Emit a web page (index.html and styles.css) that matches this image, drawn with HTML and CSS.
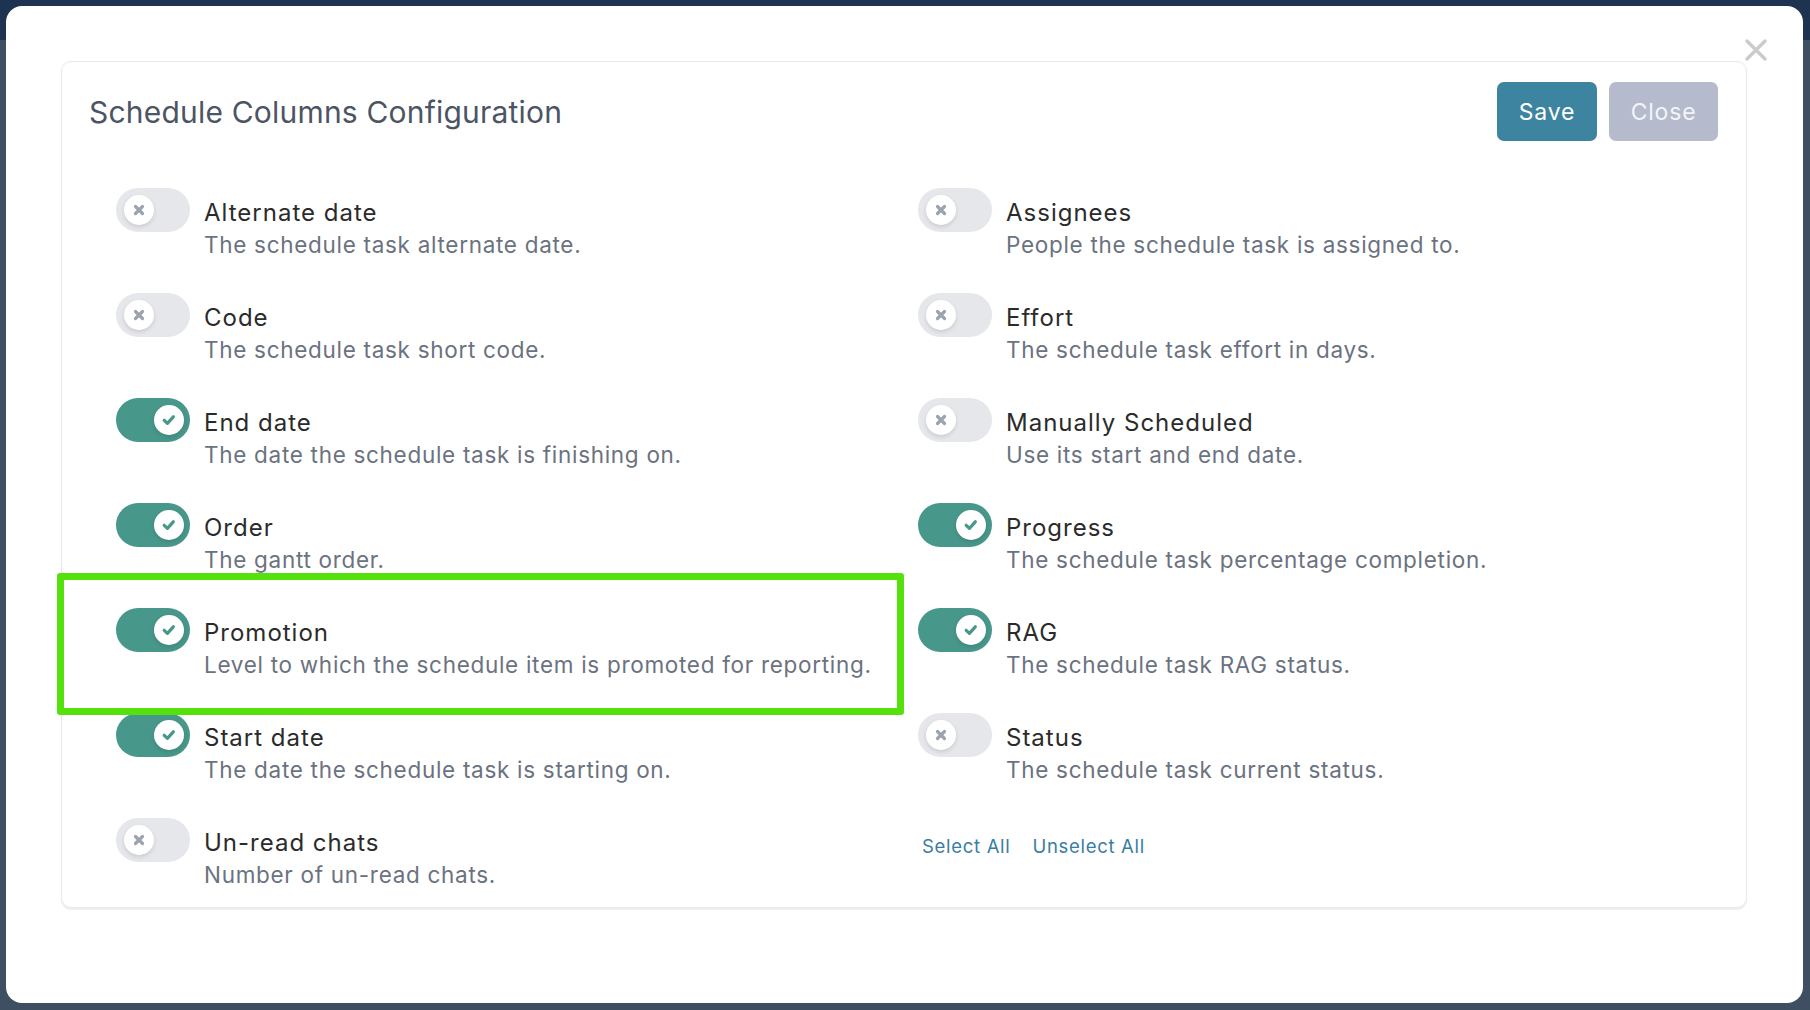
FILE: index.html
```html
<!DOCTYPE html>
<html lang="en">
<head>
  <meta charset="UTF-8">
  <meta name="viewport" content="width=device-width, initial-scale=1.0">
  <title>Schedule Columns Configuration</title>
  <link rel="stylesheet" href="styles.css">
</head>
<body>
  <div class="modal">
    <svg class="modal-x" viewBox="0 0 22 22"><path d="M2 2l18 18M20 2L2 20" stroke="#cbcbcb" stroke-width="3.4" stroke-linecap="round"/></svg>

    <div class="card">
      <div class="card-head">
        <h1>Schedule Columns Configuration</h1>
        <div class="actions">
          <button class="btn save">Save</button>
          <button class="btn close">Close</button>
        </div>
      </div>

      <div class="columns" id="columnsGrid">
        <!-- columns are rendered by JS -->
      </div>
    </div>

    <div class="highlight"></div>
  </div>

  <script>
    const grid = document.getElementById("columnsGrid");

    const columns = [
      { name: "Alternate date", desc: "The schedule task alternate date.", on: false },
      { name: "Code", desc: "The schedule task short code.", on: false },
      { name: "End date", desc: "The date the schedule task is finishing on.", on: true },
      { name: "Order", desc: "The gantt order.", on: true },
      { name: "Promotion", desc: "Level to which the schedule item is promoted for reporting.", on: true },
      { name: "Start date", desc: "The date the schedule task is starting on.", on: true },
      { name: "Un-read chats", desc: "Number of un-read chats.", on: false },
      { name: "Assignees", desc: "People the schedule task is assigned to.", on: false },
      { name: "Effort", desc: "The schedule task effort in days.", on: false },
      { name: "Manually Scheduled", desc: "Use its start and end date.", on: false },
      { name: "Progress", desc: "The schedule task percentage completion.", on: true },
      { name: "RAG", desc: "The schedule task RAG status.", on: true },
      { name: "Status", desc: "The schedule task current status.", on: false },
    ];

    const crossIcon = '<svg width="12" height="12" viewBox="0 0 12 12"><path d="M2.5 2.5l7 7M9.5 2.5l-7 7" stroke="#9ca3af" stroke-width="3.2" stroke-linecap="round"/></svg>';
    const checkIcon = '<svg width="16" height="16" viewBox="0 0 16 16"><path d="M3.2 8.3l3.2 3 5.9-6.5" fill="none" stroke="#48978b" stroke-width="3.2" stroke-linecap="round" stroke-linejoin="round"/></svg>';

    columns.forEach(col => {
      const item = document.createElement("div");
      item.className = "item";
      item.innerHTML = `
        <span class="toggle ${col.on ? "on" : ""}"><span class="knob">${col.on ? checkIcon : crossIcon}</span></span>
        <div class="text">
          <div class="label">${col.name}</div>
          <div class="desc">${col.desc}</div>
        </div>`;
      grid.appendChild(item);
    });

    // Select / unselect links sit in the last cell
    const links = document.createElement("div");
    links.className = "links";
    links.innerHTML = '<a href="#">Select All</a><a href="#">Unselect All</a>';
    grid.appendChild(links);
  </script>
</body>
</html>
```

FILE: styles.css
```css
html, body { height: 100%; }
body { margin: 0; padding: 6px 7px 7px 6px; box-sizing: border-box; font-family: Inter, "Noto Sans", sans-serif; background: linear-gradient(#1d3350 0 40px, #3e4f61 40px); }
.modal { position: relative; height: 100%; box-sizing: border-box; padding: 55px 56px 0 55px; background: #fff; border-radius: 16px; }
.modal-x { position: absolute; top: 33px; right: 36px; width: 22px; height: 22px; }

.card { border: 1px solid #e6e8eb; border-radius: 10px; box-shadow: 0 2px 0 #eceef0; padding: 20px 28px 16px 27px; }
.card-head { display: flex; justify-content: space-between; align-items: center; }
h1 { margin: 0; font-size: 30px; font-weight: 400; letter-spacing: 0.2px; color: #4b5563; }
.actions { display: flex; gap: 12px; }
.btn { height: 59px; padding: 0; border: 0; border-radius: 7px; font-family: inherit; font-size: 23px; letter-spacing: 0.8px; color: #fff; cursor: pointer; }
.save { width: 100px; background: #3d84a1; }
.close { width: 109px; background: #b5bbcc; color: #f3f4f8; }

.columns { display: grid; grid-template-columns: 802px 1fr; grid-template-rows: repeat(7, 73px); grid-auto-flow: column; row-gap: 32px; margin: 47px 0 0 27px; }
.item { display: flex; align-items: flex-start; gap: 14px; }
.toggle { position: relative; flex: none; width: 74px; height: 44px; border-radius: 22px; background: #e5e7eb; }
.toggle.on { background: #48978b; }
.knob { position: absolute; top: 7px; left: 8px; width: 30px; height: 30px; border-radius: 50%; background: #fff; box-shadow: 0 2px 4px rgba(0, 0, 0, 0.12); display: flex; align-items: center; justify-content: center; }
.toggle.on .knob { left: auto; right: 6px; }
.text { padding-top: 8px; }
.label { font-size: 24px; line-height: 34px; letter-spacing: 1px; color: #2b2b2b; }
.desc { font-size: 22.5px; line-height: 30px; letter-spacing: 0.7px; color: #6b7280; }

.links { padding: 17px 0 0 4px; font-size: 18.5px; letter-spacing: 0.7px; }
.links a { color: #3a7da2; text-decoration: none; margin-right: 22px; }

.highlight { position: absolute; left: 51px; top: 567px; width: 847px; height: 142px; box-sizing: border-box; border: 7px solid #55e20c; border-radius: 3px; }
```
